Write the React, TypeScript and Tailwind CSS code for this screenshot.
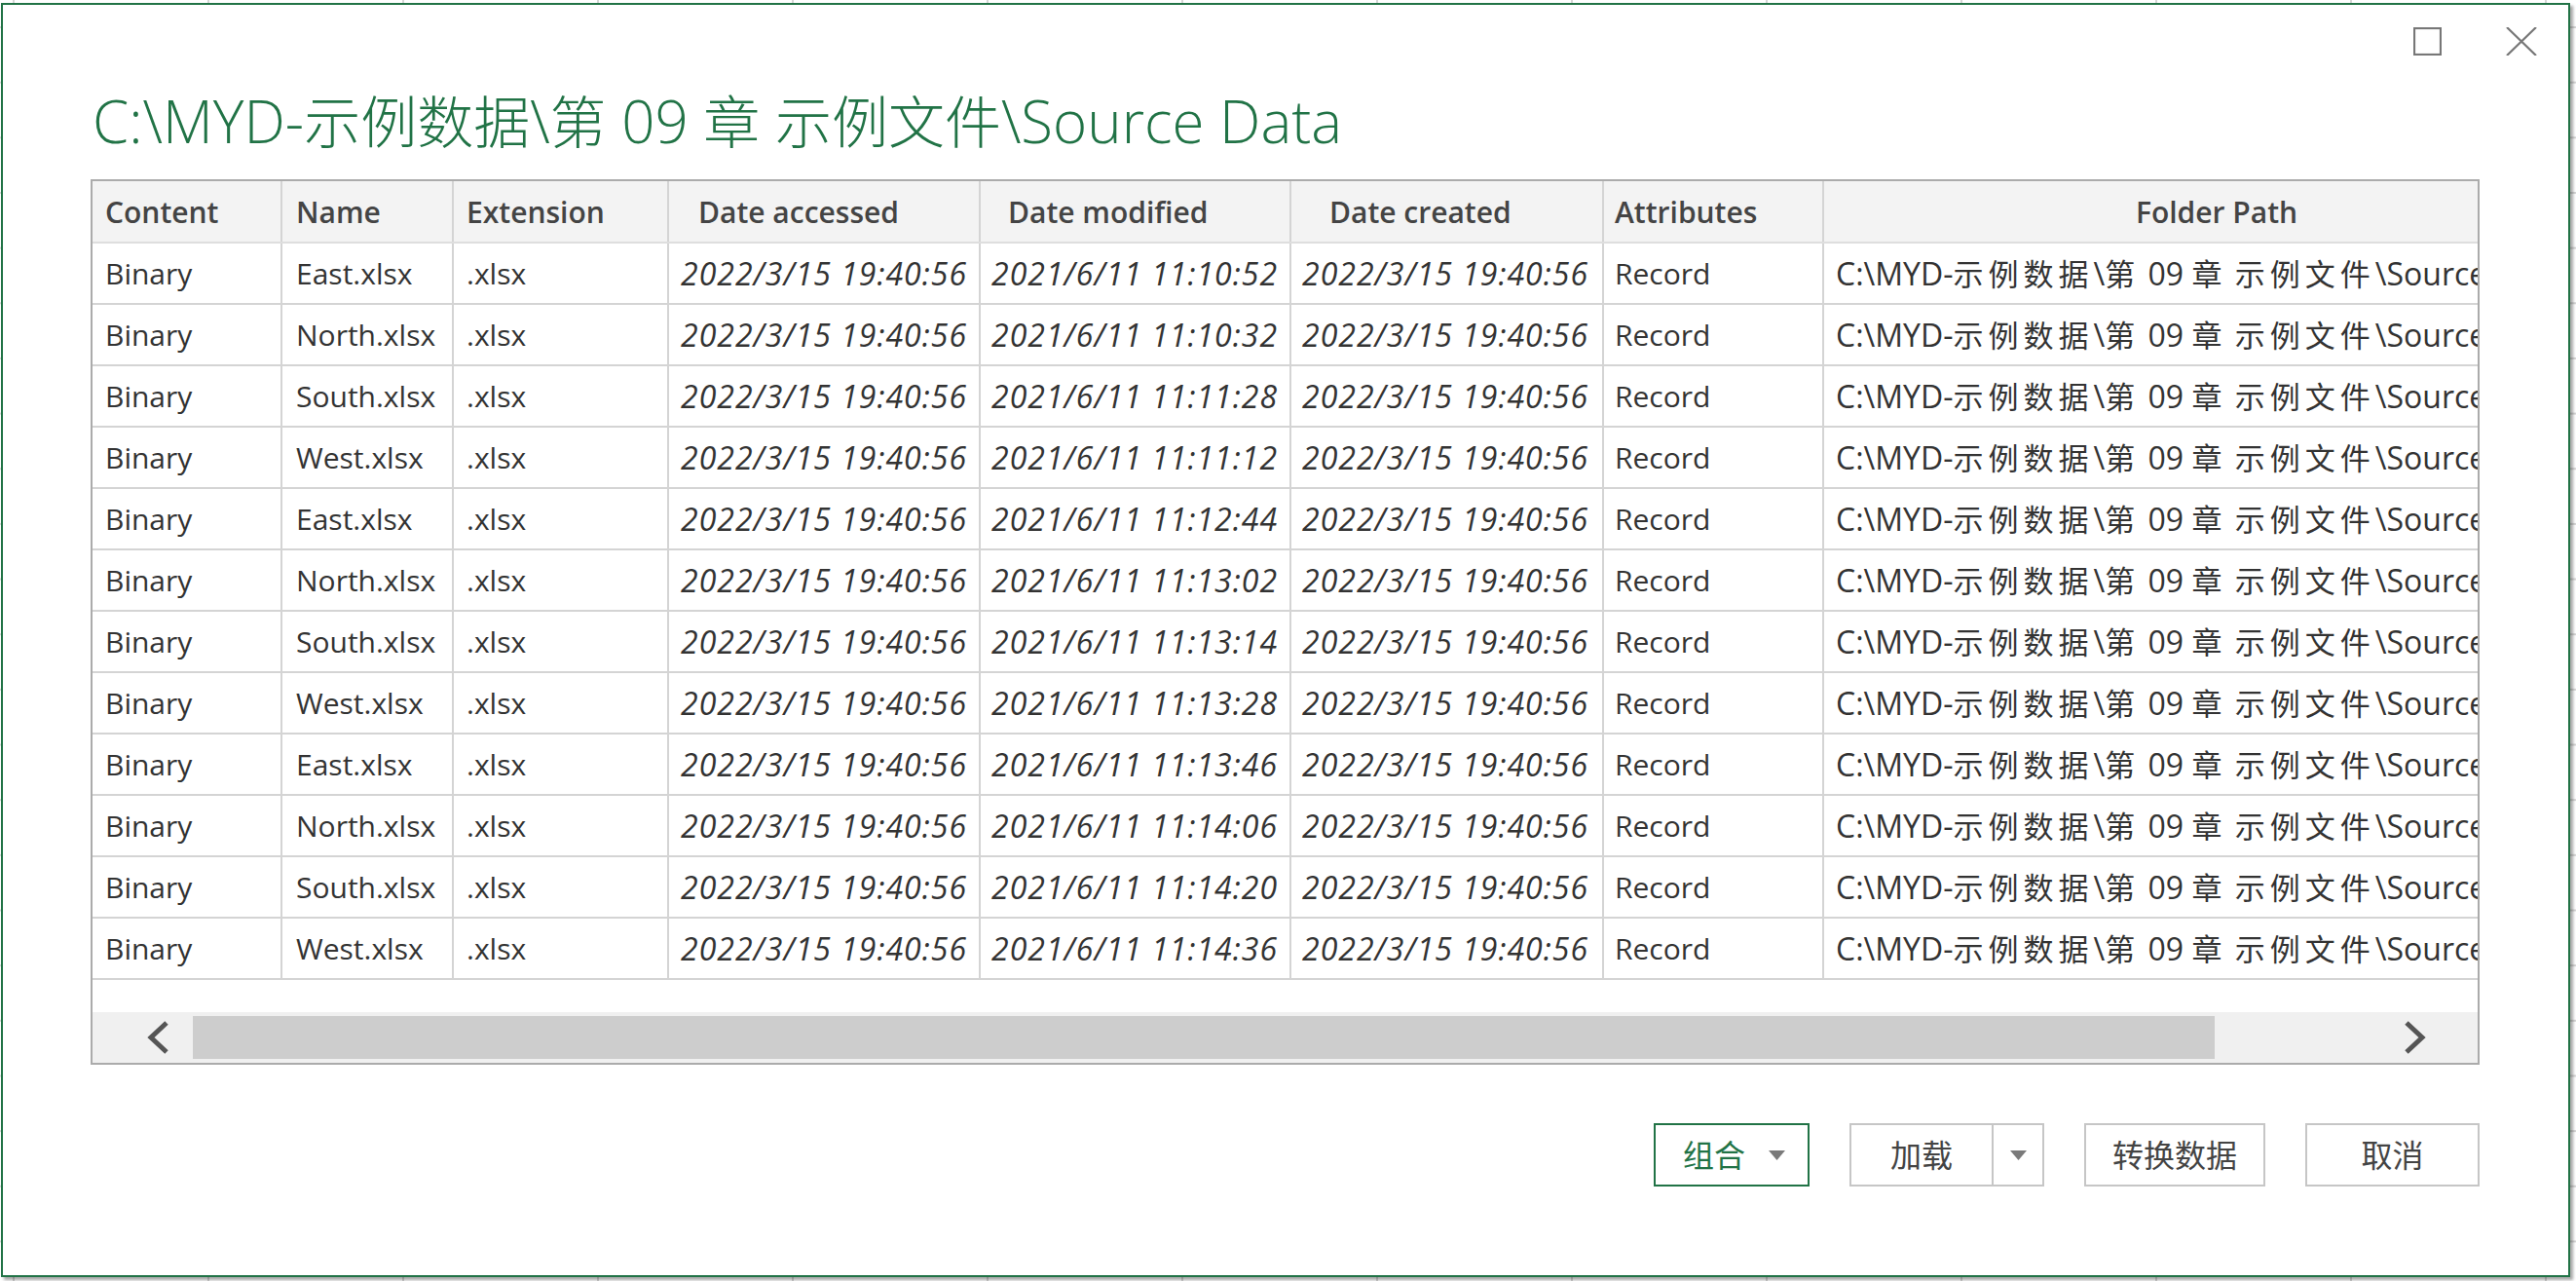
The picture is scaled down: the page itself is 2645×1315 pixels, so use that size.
import React from "react";

const FONT = { fontFamily: '"Segoe UI", "Open Sans", "Noto Sans CJK SC", sans-serif' };

const rows: [string, string][] = [
  ["East.xlsx", "2021/6/11 11:10:52"],
  ["North.xlsx", "2021/6/11 11:10:32"],
  ["South.xlsx", "2021/6/11 11:11:28"],
  ["West.xlsx", "2021/6/11 11:11:12"],
  ["East.xlsx", "2021/6/11 11:12:44"],
  ["North.xlsx", "2021/6/11 11:13:02"],
  ["South.xlsx", "2021/6/11 11:13:14"],
  ["West.xlsx", "2021/6/11 11:13:28"],
  ["East.xlsx", "2021/6/11 11:13:46"],
  ["North.xlsx", "2021/6/11 11:14:06"],
  ["South.xlsx", "2021/6/11 11:14:20"],
  ["West.xlsx", "2021/6/11 11:14:36"],
];

const cellBase =
  "shrink-0 h-full flex items-center border-r-2 border-[#d4d4d4] overflow-hidden whitespace-nowrap";

function PathText() {
  const cjk = "text-[31px] tracking-[5px] leading-none";
  return (
    <span className="whitespace-nowrap text-[32px]">
      C:\MYD-<span className={cjk}>示例数据</span>\<span className={cjk}>第</span> 09{" "}
      <span className={cjk}>章</span> <span className={cjk}>示例文件</span>\Source Data\
    </span>
  );
}

function Header() {
  return (
    <div className="flex h-[64px] shrink-0 bg-[#f3f3f3] border-b-2 border-[#dedede] text-[30px] font-semibold text-[#444]">
      <div className={`${cellBase} w-[195px] pl-[13px]`}>Content</div>
      <div className={`${cellBase} w-[176px] pl-[14px]`}>Name</div>
      <div className={`${cellBase} w-[221px] pl-[13px]`}>Extension</div>
      <div className={`${cellBase} w-[320px] pl-[30px]`}>Date accessed</div>
      <div className={`${cellBase} w-[319px] pl-[28px]`}>Date modified</div>
      <div className={`${cellBase} w-[321px] pl-[39px]`}>Date created</div>
      <div className={`${cellBase} w-[226px] pl-[11px]`}>Attributes</div>
      <div className={`${cellBase} w-[808px] justify-center`}>Folder Path</div>
    </div>
  );
}

function Row({ name, mod }: { name: string; mod: string }) {
  return (
    <div className="flex h-[63px] shrink-0 border-b-2 border-[#d4d4d4] text-[30px] text-[#333]">
      <div className={`${cellBase} w-[195px] pl-[13px]`}>Binary</div>
      <div className={`${cellBase} w-[176px] pl-[14px]`}>{name}</div>
      <div className={`${cellBase} w-[221px] pl-[13px]`}>.xlsx</div>
      <div className={`${cellBase} w-[320px] justify-end pr-[12px] italic text-[32px] tracking-[1px]`}>
        2022/3/15 19:40:56
      </div>
      <div className={`${cellBase} w-[319px] justify-end pr-[12px] italic text-[32px] tracking-[1px]`}>{mod}</div>
      <div className={`${cellBase} w-[321px] justify-end pr-[14px] italic text-[32px] tracking-[1px]`}>
        2022/3/15 19:40:56
      </div>
      <div className={`${cellBase} w-[226px] pl-[11px]`}>Record</div>
      <div className={`${cellBase} w-[808px] pl-[12px]`}>
        <PathText />
      </div>
    </div>
  );
}

function Caret() {
  return (
    <svg width="17" height="10" viewBox="0 0 17 10">
      <polygon points="0,0 17,0 8.5,10" fill="#7a7a7a" />
    </svg>
  );
}

export default function App() {
  const tc = "text-[58px]";
  return (
    <div
      className="w-[2645px] h-[1315px] overflow-hidden bg-white bg-[linear-gradient(to_right,#d6d6d6_2px,transparent_2px),linear-gradient(to_bottom,#d6d6d6_2px,transparent_2px)] bg-[size:200px_56.667px] bg-[position:13px_27px] pt-[3px] pl-[1px]"
      style={FONT}
    >
      <div className="w-[2638px] h-[1308px] bg-white border-2 border-[#217346] shadow-[3px_3px_3px_rgba(0,0,0,0.35)] flex flex-col">
        {/* title bar icons */}
        <div className="flex justify-end items-center gap-[66px] pt-[23px] pr-[32px] h-[52px] shrink-0">
          <svg width="29" height="29" viewBox="0 0 29 29">
            <rect x="1" y="1" width="27" height="27" fill="none" stroke="#777" strokeWidth="2.2" />
          </svg>
          <svg width="32" height="29" viewBox="0 0 32 29">
            <path d="M1 0 L31 29 M31 0 L1 29" stroke="#777" strokeWidth="2.2" fill="none" />
          </svg>
        </div>
        {/* title */}
        <div className="mt-[37px] h-[60px] shrink-0 pl-[92px] text-[60px] leading-[60px] font-light text-[#217346] whitespace-nowrap">
          C:\MYD-<span className={tc}>示例数据</span>\<span className={tc}>第</span> 09{" "}
          <span className={tc}>章</span> <span className={tc}>示例文件</span>\Source Data
        </div>
        {/* table */}
        <div className="mt-[30px] ml-[90px] w-[2453px] h-[909px] shrink-0 border-2 border-[#ababab] flex flex-col overflow-hidden">
          <Header />
          {rows.map((r, i) => (
            <Row key={i} name={r[0]} mod={r[1]} />
          ))}
          <div className="h-[33px] shrink-0" />
          <div className="h-[52px] shrink-0 bg-[#f0f0f0] flex items-center">
            <div className="pl-[52px] w-[103px] shrink-0 flex items-center">
              <svg width="29" height="34" viewBox="0 0 29 34">
                <polyline points="24,2 8,17 24,32" fill="none" stroke="#555" strokeWidth="5" />
              </svg>
            </div>
            <div className="w-[2076px] h-[44px] shrink-0 bg-[#cdcdcd]" />
            <div className="flex-1 flex justify-end pr-[51px]">
              <svg width="26" height="34" viewBox="0 0 26 34">
                <polyline points="4,2 20,17 4,32" fill="none" stroke="#555" strokeWidth="5" />
              </svg>
            </div>
          </div>
        </div>
        {/* buttons */}
        <div className="mt-[60px] flex justify-end gap-[41px] pr-[91px] text-[32px]">
          <div className="w-[160px] h-[65px] border-2 border-[#217346] flex items-center text-[#217346]">
            <span className="ml-[28px]">组合</span>
            <span className="ml-[24px] flex items-center">
              <Caret />
            </span>
          </div>
          <div className="w-[200px] h-[65px] border-2 border-[#c6c6c6] flex text-[#444]">
            <div className="w-[146px] h-full flex items-center justify-center border-r-2 border-[#c6c6c6]">加载</div>
            <div className="flex-1 h-full flex items-center justify-center">
              <Caret />
            </div>
          </div>
          <div className="w-[186px] h-[65px] border-2 border-[#c6c6c6] flex items-center justify-center text-[#444]">
            转换数据
          </div>
          <div className="w-[179px] h-[65px] border-2 border-[#c6c6c6] flex items-center justify-center text-[#444]">
            取消
          </div>
        </div>
      </div>
    </div>
  );
}
